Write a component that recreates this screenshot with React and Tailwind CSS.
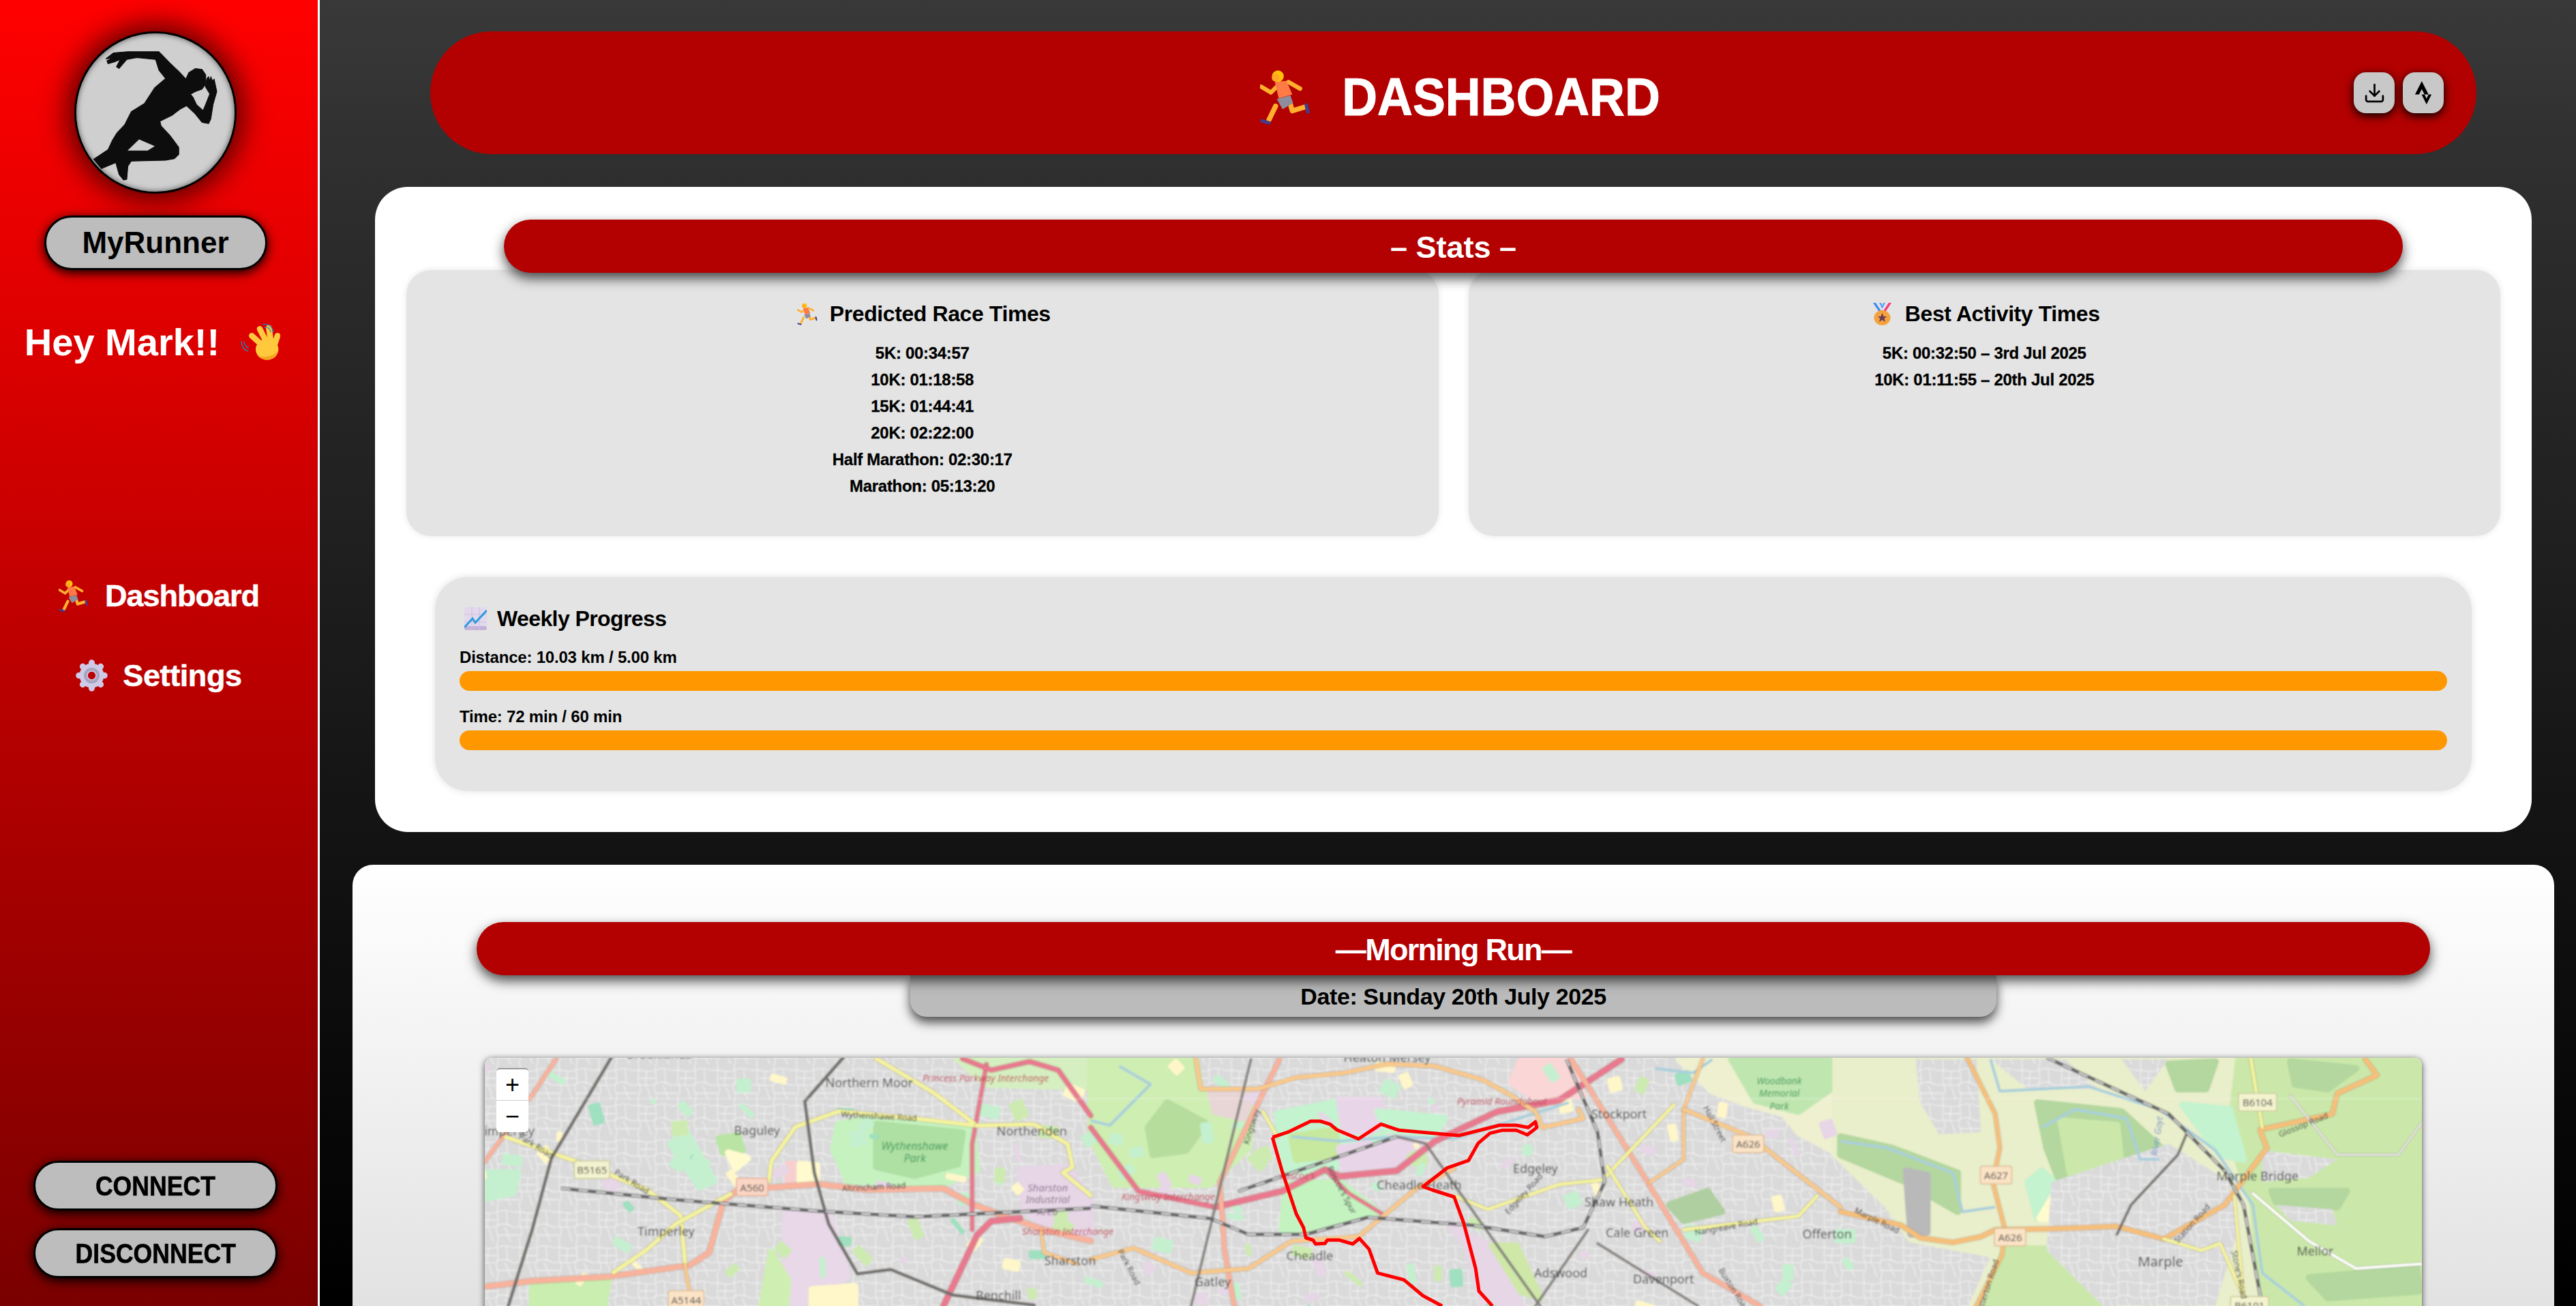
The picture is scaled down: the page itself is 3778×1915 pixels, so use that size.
import React from "react";
import { Download } from "lucide-react";
import { SiStrava } from "react-icons/si";

// coordinates below were read off crops of the map, each with its own scale
const z7 = (x, y) => [500 + x / 1.4255, 1260 + y / 2.394];
const z8 = (x, y) => [1600 + x / 1.4255, 1400 + y / 3];
const z9 = (x, y) => [2700 + x / 1.4545, 1400 + y / 3];

const toPath = (fn, pts, close) =>
  "M" + pts.map((p) => fn(p[0], p[1]).map((n) => n.toFixed(1)).join(" ")).join("L") + (close ? "Z" : "");

const AREAS = [
  // urban-side parks and pink zones
  [z7, "#c6f2c0", [[1040, 930], [1100, 910], [1320, 940], [1330, 1090], [1260, 1140], [1060, 1130], [1030, 1020]]],
  [z7, "#aedfa3", [[1120, 930], [1300, 960], [1290, 1070], [1200, 1110], [1120, 1080]]],
  [z7, "#e6d6e6", [[1420, 1090], [1520, 1080], [1568, 1200], [1568, 1340], [1470, 1290], [1430, 1230]]],
  [z7, "#e8d8e8", [[930, 1240], [1020, 1240], [1060, 1460], [990, 1568], [930, 1568]]],
  [z7, "#d5efc0", [[1290, 700], [1568, 700], [1568, 800], [1350, 790]]],
  [z7, "#c4f0cf", [[690, 1000], [720, 950], [780, 1130], [750, 1150]]],
  [z7, "#b9e4a4", [[790, 980], [830, 970], [840, 1020], [800, 1030]]],
  [z7, "#fffbcf", [[810, 1030], [850, 1050], [825, 1085]]],
  [z7, "#f7cfcf", [[935, 1070], [960, 1070], [960, 1130], [935, 1130]]],
  [z7, "#fffbcf", [[960, 1070], [995, 1075], [995, 1130], [960, 1130]]],
  [z7, "#c4f0cf", [[305, 1100], [370, 1100], [360, 1170], [305, 1190]]],
  [z7, "#c9eeb0", [[400, 1500], [560, 1470], [550, 1568], [400, 1568]]],
  [z7, "#fff7c9", [[985, 1510], [1075, 1500], [1075, 1568], [985, 1568]]],
  [z7, "#cfeeb2", [[900, 1380], [935, 1480], [930, 1568], [880, 1568]]],
  [z8, "#cfeeb2", [[0, 460], [220, 460], [230, 600], [340, 610], [330, 850], [250, 1010], [50, 1010], [0, 800]]],
  [z8, "#b7dd9d", [[120, 760], [160, 650], [240, 740], [200, 860], [130, 880]]],
  [z8, "#c4f3cf", [[390, 700], [530, 640], [560, 800], [500, 960], [400, 950]]],
  [z8, "#c6e89f", [[420, 800], [510, 770], [520, 880], [430, 900]]],
  [z8, "#c4f3c0", [[410, 1010], [520, 1000], [600, 1130], [470, 1210], [400, 1210]]],
  [z8, "#e8d6e8", [[520, 640], [600, 640], [640, 760], [530, 780]]],
  [z8, "#e8d6e8", [[520, 850], [690, 800], [700, 870], [620, 950], [530, 940]]],
  [z8, "#c4f3cf", [[600, 690], [740, 720], [720, 790], [620, 770]]],
  [z8, "#fad6d6", [[900, 460], [1000, 460], [1030, 620], [920, 620], [880, 560]]],
  [z8, "#e6d6e6", [[750, 1180], [830, 1280], [900, 1545], [820, 1545], [790, 1300]]],
  [z8, "#cfe8a8", [[840, 1280], [890, 1280], [940, 1510], [900, 1480]]],
  [z8, "#b0cfa0", [[1210, 1100], [1290, 1040], [1320, 1130], [1240, 1170]]],
  [z8, "#eef0d0", [[1230, 460], [1568, 460], [1568, 880], [1480, 780], [1450, 700], [1380, 660], [1300, 600]]],
  [z8, "#c0e6b0", [[1340, 460], [1568, 460], [1568, 560], [1480, 690], [1390, 640]]],
  [z8, "#e8d6d6", [[250, 600], [340, 610], [320, 720], [260, 690]]],
  // open country to the east, with an uneven edge towards the town
  [z9, "#e9eecb", [[-10, 452], [1245, 452], [1245, 1545], [280, 1545], [330, 1320], [150, 1250], [100, 1100], [-10, 880]]],
  [z9, "#cbe8aa", [[850, 452], [1245, 452], [1245, 1545], [900, 1545], [880, 1100], [830, 800]]],
  [z9, "#b3d79e", [[420, 650], [600, 690], [700, 880], [640, 1000], [470, 1010], [440, 850]]],
  [z9, "#cbe8aa", [[470, 730], [590, 750], [600, 940], [490, 960]]],
  [z9, "#b3d79e", [[0, 800], [110, 850], [250, 960], [250, 1130], [140, 1000], [0, 880]]],
  [z9, "#cbe8aa", [[350, 1290], [560, 1300], [560, 1545], [310, 1545]]],
  [z9, "#c4f3cf", [[730, 660], [830, 680], [860, 900], [810, 880]]],
  [z9, "#b3d79e", [[920, 1040], [1080, 1040], [1060, 1110], [930, 1090]]],
  [z9, "#b3d79e", [[1000, 1420], [1230, 1380], [1235, 1480], [1040, 1510]]],
  [z9, "#b3d79e", [[700, 480], [800, 470], [780, 590], [720, 590]]],
  [z9, "#b3d79e", [[960, 470], [1100, 500], [1040, 590], [970, 570]]],
  [z9, "#b9b9b9", [[140, 950], [185, 970], [185, 1220], [150, 1230]]],
  [z9, "#c4f3cf", [[400, 1000], [430, 950], [470, 1030], [420, 1160]]],
  [z9, "#fffbcf", [[460, 1040], [475, 1030], [445, 1160], [425, 1160]]],
];

const URBAN = [
  [z9, [[450, 1000], [700, 830], [830, 1000], [850, 1200], [800, 1545], [560, 1545], [440, 1300]]],
  [z9, [[160, 460], [290, 460], [300, 780], [210, 790], [170, 650]]],
  [z9, [[320, 460], [480, 460], [550, 590], [400, 590]]],
  [z9, [[600, 460], [700, 460], [650, 600]]],
  [z9, [[900, 860], [1060, 900], [1000, 980], [900, 1000]]],
  [z9, [[930, 1100], [1050, 1120], [1060, 1190], [960, 1170]]],
];

// little parks and pitches scattered through the built-up part
let seed = 11;
const rnd = () => (seed = (seed * 16807) % 2147483647) / 2147483647;
const SPOT_COLOURS = ["#c4f0cf", "#cdebb0", "#fff7c9", "#c4f0cf", "#e6d6e6", "#9fe0c0"];
const SPOTS = Array.from({ length: 130 }, () => ({
  x: 711 + rnd() * 2000,
  y: 1551 + rnd() * 364,
  w: 8 + rnd() * 24,
  h: 7 + rnd() * 18,
  r: rnd() * 90,
  fill: SPOT_COLOURS[Math.floor(rnd() * SPOT_COLOURS.length)],
}));

const ROADS = [
  // [crop, colour, width, points]
  [z7, "#f9b29c", 8, [[301, 1500], [400, 1480], [560, 1465], [730, 1425], [770, 1380], [800, 1200], [830, 1160], [1000, 1140], [1100, 1160], [1260, 1155], [1320, 1210], [1400, 1260], [1470, 1300], [1568, 1340]]],
  [z7, "#f9b29c", 6, [[450, 700], [395, 840]]],
  [z7, "#f9b29c", 6, [[345, 960], [301, 1060]]],
  [z7, "#e8798f", 9, [[1260, 1568], [1330, 1320], [1360, 1270], [1420, 1260]]],
  [z7, "#e8798f", 6, [[1350, 720], [1320, 1000], [1320, 1300]]],
  [z7, "#e8798f", 7, [[1300, 700], [1360, 740], [1440, 710], [1500, 740], [1568, 900]]],
  [z7, "#f4f39e", 6, [[1120, 700], [1240, 820], [1330, 935], [1200, 910], [1040, 885], [950, 940], [900, 1060], [895, 1130]]],
  [z7, "#f4f39e", 6, [[1330, 935], [1450, 930], [1520, 1000], [1530, 1080], [1510, 1100], [1568, 1180]]],
  [z7, "#f4f39e", 6, [[345, 975], [500, 1065], [640, 1160], [710, 1250], [720, 1420]]],
  [z7, "#f4f39e", 6, [[815, 1175], [700, 1280], [640, 1370], [570, 1450]]],
  [z7, "#f9c98c", 5, [[1465, 1300], [1470, 1380], [1540, 1420]]],
  [z7, "#f9c98c", 5, [[720, 1425], [730, 1540]]],
  [z7, "#6e6e6e", 4, [[565, 697], [440, 1050], [400, 1300], [350, 1568]]],
  [z7, "#6e6e6e", 4, [[1050, 697], [970, 850], [990, 1100], [1020, 1280], [1080, 1455], [1150, 1440], [1280, 1530], [1450, 1565]]],
  [z8, "#e8798f", 7, [[0, 760], [100, 1040], [260, 1110]]],
  [z8, "#e8798f", 9, [[260, 1110], [400, 1040], [490, 945], [520, 975], [640, 950], [720, 820], [850, 690], [980, 640], [1110, 460]]],
  [z8, "#e8798f", 5, [[490, 945], [540, 1050], [610, 1140]]],
  [z8, "#f9b29c", 7, [[395, 460], [270, 1000], [280, 1300], [300, 1545]]],
  [z8, "#f9b29c", 7, [[1005, 460], [1150, 950], [1280, 1400], [1400, 1545]]],
  [z8, "#f9c98c", 6, [[220, 460], [230, 590], [350, 590], [430, 540], [530, 520], [620, 480], [720, 490], [820, 550], [880, 620], [930, 690], [945, 760], [1030, 720], [1020, 680]]],
  [z8, "#f9c98c", 6, [[0, 1340], [90, 1290], [210, 1400], [330, 1380], [420, 1260], [560, 1240], [680, 1030], [760, 940]]],
  [z8, "#f9c98c", 5, [[1280, 460], [1240, 680], [1240, 900], [1170, 1000]]],
  [z8, "#f9c98c", 6, [[1240, 680], [1380, 800], [1440, 900], [1568, 1110]]],
  [z8, "#f4f39e", 5, [[360, 690], [390, 800]]],
  [z8, "#f4f39e", 5, [[760, 1060], [830, 1120], [980, 1010], [1070, 990], [1220, 660]]],
  [z8, "#f4f39e", 5, [[1080, 930], [1160, 1200], [1190, 1260]]],
  [z8, "#f4f39e", 5, [[1240, 1210], [1480, 1150], [1520, 1060]]],
  [z8, "#808080", 3, [[335, 460], [210, 1545]]],
  [z8, "#808080", 3, [[310, 1040], [640, 800], [700, 830], [790, 1100], [940, 1545]]],
  [z8, "#808080", 3, [[1040, 1210], [930, 1545]]],
  [z8, "#808080", 3, [[1060, 1270], [1270, 1545]]],
  [z9, "#f6bf7a", 6, [[270, 452], [330, 700], [340, 850], [325, 1000], [350, 1200], [345, 1320], [290, 1545]]],
  [z9, "#f6bf7a", 7, [[0, 1130], [130, 1190], [170, 1245], [240, 1265], [300, 1240], [330, 1210], [450, 1205], [590, 1195], [690, 1250], [820, 1100], [910, 850], [895, 770], [1050, 700], [1060, 610], [1145, 530], [1120, 460]]],
  [z9, "#f4f39e", 5, [[875, 452], [900, 760]]],
  [z9, "#f4f39e", 5, [[690, 1250], [770, 1300], [810, 1270], [860, 1500]]],
  [z9, "#f4f39e", 4, [[840, 1060], [860, 1500]]],
  [z9, "#ffffff", 4, [[880, 1050], [1000, 1260], [1100, 1380], [1240, 1360]]],
  [z9, "#e4e4e4", 3, [[960, 620], [1060, 880], [1190, 880], [1240, 740]]],
  [z9, "#6d6d6d", 3, [[740, 780], [720, 880], [620, 1100], [590, 1230]]],
];

const RIVERS = [
  [z8, [[60, 490], [125, 570], [40, 750], [0, 730]]],
  [z8, [[420, 800], [520, 820], [640, 800], [760, 810], [1000, 650]]],
  [z8, [[1180, 500], [1260, 520], [1300, 460]]],
  [z9, [[320, 460], [340, 600], [530, 580], [680, 680], [800, 860], [880, 1100], [900, 1400], [990, 1545]]],
  [z9, [[0, 820], [100, 850], [240, 960], [260, 1130], [330, 1110]]],
  [z9, [[430, 760], [500, 680], [610, 720], [640, 900], [680, 900]]],
];

const RAILS = [
  [z7, [[460, 1155], [700, 1195], [1000, 1235], [1200, 1255], [1568, 1225]]],
  [z8, [[0, 1105], [250, 1160], [330, 1230], [450, 1230], [580, 1155], [800, 1190], [950, 1240], [1030, 1200], [1075, 1000], [1060, 780], [995, 460]]],
  [z8, [[310, 1040], [640, 800]]],
  [z9, [[440, 452], [700, 700], [820, 950], [860, 1100], [900, 1545]]],
];

const ROUTE = [
  [[380, 803], [415, 778], [460, 732], [480, 732], [500, 745], [515, 770], [560, 810], [607, 745], [645, 772], [770, 795], [855, 750], [890, 750], [915, 760], [930, 735], [933, 760], [913, 792], [890, 772], [860, 772], [835, 785], [810, 830], [790, 905], [745, 938], [695, 1020], [715, 1035], [760, 1065], [780, 1180], [795, 1300], [805, 1380], [812, 1480], [840, 1545]],
  [[380, 803], [400, 950], [430, 1140], [445, 1200], [450, 1245], [465, 1255], [470, 1272], [490, 1270], [495, 1255], [520, 1255], [548, 1272], [562, 1248], [582, 1295], [600, 1400], [655, 1430], [695, 1500], [735, 1545]],
];

// [crop, x, y, text, size, colour, rotation, italic]
const LABELS = [
  [z7, 665, 700, "Brooklands", 18, "#444"],
  [z7, 1105, 800, "Northern Moor", 18, "#444"],
  [z7, 1348, 780, "Princess Parkway Interchange", 14, "#c3465a", 0, true],
  [z7, 870, 968, "Baguley", 18, "#444"],
  [z7, 1445, 970, "Northenden", 18, "#444"],
  [z7, 1200, 1020, "Wythenshawe", 16, "#3d9a5a", 0, true],
  [z7, 1200, 1062, "Park", 16, "#3d9a5a", 0, true],
  [z7, 1125, 912, "Wythenshawe Road", 12, "#333", 3],
  [z7, 1115, 1160, "Altrincham Road", 12, "#333", -3],
  [z7, 405, 1015, "Park Road", 12, "#333", 32],
  [z7, 605, 1140, "Park Road", 12, "#333", 32],
  [z7, 345, 970, "Timperley", 18, "#444"],
  [z7, 680, 1322, "Timperley", 18, "#444"],
  [z7, 1478, 1165, "Sharston", 15, "#8b6f8b", 0, true],
  [z7, 1478, 1207, "Industrial", 15, "#8b6f8b", 0, true],
  [z7, 1478, 1250, "Area", 15, "#8b6f8b", 0, true],
  [z7, 1520, 1320, "Sharston Interchange", 14, "#c3465a", 0, true],
  [z7, 1375, 1547, "Benchill", 18, "#444"],
  [z7, 1525, 1425, "Sharston", 18, "#444"],
  [z8, 620, 470, "Heaton Mersey", 18, "#444"],
  [z8, 860, 660, "Pyramid Roundabout", 14, "#c3465a", 0, true],
  [z8, 1105, 720, "Stockport", 18, "#444"],
  [z8, 1440, 570, "Woodbank", 14, "#3d9a5a", 0, true],
  [z8, 1440, 625, "Memorial", 14, "#3d9a5a", 0, true],
  [z8, 1440, 680, "Park", 14, "#3d9a5a", 0, true],
  [z8, 1300, 750, "Hall Street", 12, "#333", 62],
  [z8, 930, 960, "Edgeley", 18, "#444"],
  [z8, 910, 1060, "Edgeley Road", 12, "#333", -48],
  [z8, 1105, 1108, "Shaw Heath", 18, "#444"],
  [z8, 1143, 1242, "Cale Green", 18, "#444"],
  [z8, 1330, 1210, "Nangreave Road", 12, "#333", -10],
  [z8, 1540, 1248, "Offerton", 18, "#444"],
  [z8, 983, 1418, "Adswood", 18, "#444"],
  [z8, 1198, 1445, "Davenport", 18, "#444"],
  [z8, 687, 1032, "Cheadle Heath", 18, "#444"],
  [z8, 432, 988, "Roscoe's", 14, "#c3465a", 0, true],
  [z8, 520, 1040, "Roscoe's Spur", 12, "#333", 62],
  [z8, 162, 1080, "Kingsway Interchange", 14, "#c3465a", 0, true],
  [z8, 458, 1345, "Cheadle", 18, "#444"],
  [z8, 255, 1458, "Gatley", 18, "#444"],
  [z8, 342, 760, "Kingsway", 12, "#333", -72],
  [z8, 1340, 1480, "Buxton Road", 12, "#333", 58],
  [z8, 75, 1380, "Park Road", 12, "#333", 62],
  [z9, 890, 992, "Marple Bridge", 18, "#444"],
  [z9, 1013, 1322, "Mellor", 18, "#444"],
  [z9, 683, 1372, "Marple", 20, "#444"],
  [z9, 990, 760, "Glossop Road", 12, "#333", -22],
  [z9, 755, 1190, "Station Road", 12, "#333", -48],
  [z9, 75, 1180, "Marple Road", 12, "#333", 26],
  [z9, 845, 1410, "Stone's Road", 12, "#333", 78],
  [z9, 682, 800, "River Goyt", 13, "#6f93c9", -82, true],
  [z9, 320, 1460, "Otterton Road", 12, "#333", -72],
];

const SHIELDS = [
  [z7, 525, 1092, "B5165", "#f3f3cf", "#c9c99a", 52],
  [z7, 860, 1153, "A560", "#fbd6c4", "#e0ab95", 46],
  [z7, 722, 1548, "A5144", "#fbe3c6", "#dcbb90", 52],
  [z8, 1375, 835, "A626", "#fbe3c6", "#dcbb90", 46],
  [z9, 890, 652, "B6104", "#f3f3cf", "#c9c99a", 56],
  [z9, 332, 972, "A627", "#fbe3c6", "#dcbb90", 46],
  [z9, 362, 1245, "A626", "#fbe3c6", "#dcbb90", 46],
  [z9, 873, 1545, "B6101", "#f3f3cf", "#c9c99a", 56],
];

const RouteMap = () => (
  <svg viewBox="711 1551 2842 520" className="block w-full h-[520px]" preserveAspectRatio="none">
    <defs>
      <pattern id="streets" width="58" height="52" patternUnits="userSpaceOnUse">
        <rect width="58" height="52" fill="#dadada" />
        <path
          d="M0 10C10 6 18 14 30 10S48 5 58 10M0 32C10 27 20 36 32 30S48 27 58 32M8 0C11 13 5 22 10 32S6 46 8 52M34 0C30 11 38 20 33 30S38 44 34 52M20 11C21 19 17 24 20 32M47 6C46 16 50 22 47 29M20 35C27 40 22 46 28 52M44 32C50 38 46 44 54 52M0 43H8M34 43H58M10 21H33"
          fill="none"
          stroke="#f1f1f1"
          strokeWidth="1.3"
        />
      </pattern>
      <filter id="soft">
        <feGaussianBlur stdDeviation="0.8" />
      </filter>
    </defs>
    <g filter="url(#soft)">
      <rect x="705" y="1545" width="2854" height="530" fill="url(#streets)" />
      {AREAS.map(([fn, fill, pts], i) => (
        <path key={i} d={toPath(fn, pts, true)} fill={fill} stroke={fill} strokeWidth="10" strokeLinejoin="round" />
      ))}
      {URBAN.map(([fn, pts], i) => (
        <path key={i} d={toPath(fn, pts, true)} fill="url(#streets)" />
      ))}
      {SPOTS.map((s, i) => (
        <rect key={i} x={s.x} y={s.y} width={s.w} height={s.h} rx="3" fill={s.fill} transform={`rotate(${s.r} ${s.x} ${s.y})`} />
      ))}
      {RIVERS.map(([fn, pts], i) => (
        <path key={i} d={toPath(fn, pts)} fill="none" stroke="#a9cfdc" strokeWidth="4" strokeLinejoin="round" />
      ))}
      {ROADS.map(([fn, color, w, pts], i) => (
        <g key={i} fill="none" strokeLinejoin="round" strokeLinecap="round">
          <path d={toPath(fn, pts)} stroke="#7a6a50" strokeOpacity="0.3" strokeWidth={w + 2} />
          <path d={toPath(fn, pts)} stroke={color} strokeWidth={w} />
        </g>
      ))}
      {RAILS.map(([fn, pts], i) => (
        <g key={i} fill="none" strokeLinejoin="round">
          <path d={toPath(fn, pts)} stroke="#666" strokeWidth="5" />
          <path d={toPath(fn, pts)} stroke="#e8e8e8" strokeWidth="2" strokeDasharray="14 12" />
        </g>
      ))}
      <path d="M711 1611H3553" stroke="#ffffff" strokeOpacity="0.45" strokeWidth="1" />
      {SHIELDS.map(([fn, x, y, text, fill, line, w], i) => {
        const [px, py] = fn(x, y);
        return (
          <g key={i}>
            <rect x={px - w / 2} y={py - 14} width={w} height={26} rx="3" fill={fill} stroke={line} strokeWidth="1.5" />
            <text x={px} y={py + 5} textAnchor="middle" fontSize="15" fill="#444" className="font-['Noto_Sans',sans-serif]">
              {text}
            </text>
          </g>
        );
      })}
      {LABELS.map(([fn, x, y, text, size, color, rot, italic], i) => {
        const [px, py] = fn(x, y);
        return (
          <text
            key={i}
            x={px}
            y={py}
            textAnchor="middle"
            fontSize={size}
            fontStyle={italic ? "italic" : "normal"}
            fill={color}
            transform={rot ? `rotate(${rot} ${px} ${py})` : undefined}
            className="font-['Noto_Sans',sans-serif]"
          >
            {text}
          </text>
        );
      })}
    </g>
    {ROUTE.map((pts, i) => (
      <path key={i} d={toPath(z8, pts)} fill="none" stroke="#ff0000" strokeWidth="5" strokeLinejoin="round" />
    ))}
  </svg>
);

const RunnerLogo = () => (
  <svg viewBox="327 130 715 667" preserveAspectRatio="none" className="block w-full h-full">
    <path
      fill="#0d0d0d"
      stroke="#0d0d0d"
      strokeWidth="3"
      strokeLinejoin="round"
      fillRule="evenodd"
      d="M460 237L495 212L560 207L700 207L712 218L750 255L790 290L810 310L822 322L835 295L865 278L895 282L912 305L912 345L905 352L895 365L865 375L845 385L828 370L855 400L870 430L900 455L915 420L930 385L910 355L917 320L925 312L930 330L935 312L942 330L950 322L955 345L962 375L945 430L935 490L925 510L895 505L860 465L825 435L795 450L760 475L705 500L710 520L750 560L790 610L790 640L770 658L730 665L575 668L560 690L555 745L540 748L520 725L505 675L440 700L405 660L470 620L490 580L510 550L545 515L575 460L635 425L680 360L730 320L700 285L685 240L600 232L555 240L520 278L508 270L525 240L500 250L470 258L465 245L490 235ZM555 625L610 575L685 605L650 625Z"
    />
  </svg>
);

const RunnerIcon = ({ className }) => (
  <svg viewBox="0 0 128 144" className={className}>
    <g fill="none" strokeLinecap="round" strokeLinejoin="round">
      <path d="M78 90L83 107L116 97" stroke="#ffb02e" strokeWidth="13" />
      <path d="M40 95L23 130" stroke="#ffb02e" strokeWidth="13" />
      <path d="M43 45L28 60L3 45" stroke="#ffb02e" strokeWidth="11" />
      <path d="M73 33L103 50" stroke="#ffb02e" strokeWidth="11" />
      <path d="M119 92L123 110" stroke="#433b8b" strokeWidth="9" />
      <path d="M5 133L23 138" stroke="#433b8b" strokeWidth="9" />
    </g>
    <path d="M38 33L68 30L83 65L48 75Z" fill="#ff7a45" />
    <path d="M43 77L78 67L85 87L58 103Z" fill="#8d8d9c" />
    <circle cx="46" cy="18" r="15" fill="#ffc107" />
    <circle cx="40" cy="22" r="10" fill="#ffa726" />
  </svg>
);

const WaveIcon = ({ className }) => (
  <svg viewBox="0 0 180 165" className={className}>
    <g fill="none" strokeLinecap="round">
      <path d="M55 55L110 105M90 25L125 95M130 20L140 90M168 55L150 110" stroke="#ffc83d" strokeWidth="26" />
      <path d="M10 80C8 100 20 118 38 122M22 82C22 94 30 104 40 108" stroke="#1a8ac9" strokeWidth="4" />
      <path d="M105 5C125 0 145 15 150 38M112 18C125 15 135 25 138 38" stroke="#1a8ac9" strokeWidth="4" />
    </g>
    <ellipse cx="122" cy="115" rx="50" ry="46" fill="#ffc83d" />
    <path d="M85 145C110 170 160 165 172 115C165 140 120 155 85 145Z" fill="#f6a21c" />
  </svg>
);

const GearIcon = ({ className }) => (
  <svg viewBox="0 0 100 100" className={className}>
    <g stroke="#cfc9e8" strokeWidth="19" strokeLinecap="round">
      <path d="M50 10V28M50 72V90M10 50H28M72 50H90M22 22L34 34M66 66L78 78M78 22L66 34M34 66L22 78" />
    </g>
    <circle cx="50" cy="50" r="25" fill="none" stroke="#cfc9e8" strokeWidth="26" />
    <circle cx="50" cy="50" r="20" fill="none" stroke="#a8a3bf" strokeWidth="9" />
  </svg>
);

const MedalIcon = ({ className }) => (
  <svg viewBox="0 0 31 33" className={className}>
    <path d="M2 0L12 15H16L6 0Z" fill="#3f8cf0" />
    <path d="M29 0L19 15H15L25 0Z" fill="#f5397b" />
    <path d="M11 0L15.5 9L20 0H17L15.5 4L14 0Z" fill="#5aa2ff" />
    <ellipse cx="15.5" cy="22" rx="12" ry="11" fill="#f4a23c" />
    <path d="M15.5 15L17.5 20H22L18.5 23L20 28L15.5 25L11 28L12.5 23L9 20H13.5Z" fill="#6b3b5a" />
  </svg>
);

const ChartIcon = ({ className }) => (
  <svg viewBox="0 0 33 34" className={className}>
    <rect width="33" height="34" rx="4" fill="#e2d9ee" />
    <rect y="28" width="33" height="6" rx="3" fill="#c3b3d8" />
    <path d="M11 0V34M22 0V34M0 11H33M0 22H33" stroke="#cfc3de" strokeWidth="1.2" />
    <path d="M0 30L12 17L16 23L33 5" fill="none" stroke="#2f9bdc" strokeWidth="3" />
  </svg>
);

const Pill = ({ children, className }) => (
  <button
    type="button"
    className={`flex items-center justify-center rounded-full border-[3px] border-black bg-[#bdbdbd] shadow-[0_4px_16px_#000] text-black font-bold ${className}`}
  >
    {children}
  </button>
);

const RedBar = ({ children, className }) => (
  <div
    className={`relative z-20 h-[78px] pt-[3px] flex items-center justify-center rounded-[39px] bg-[#b30000] text-white text-[45px] font-bold shadow-[0_8px_18px_rgba(0,0,0,0.7)] ${className}`}
  >
    {children}
  </div>
);

const predicted = ["5K: 00:34:57", "10K: 01:18:58", "15K: 01:44:41", "20K: 02:22:00", "Half Marathon: 02:30:17", "Marathon: 05:13:20"];
const best = ["5K: 00:32:50 – 3rd Jul 2025", "10K: 01:11:55 – 20th Jul 2025"];

const TimesCard = ({ icon, title, rows }) => (
  <div className="h-[390px] pt-[45px] flex flex-col items-center rounded-[36px] bg-[#e4e4e4] shadow-[0_0_10px_rgba(0,0,0,0.1)]">
    <div className="h-[38px] pl-[4px] flex items-center gap-[18px] text-[32px] font-bold text-black tracking-[-0.4px]">
      {icon}
      <span>{title}</span>
    </div>
    <div className="mt-[19px] text-[24px] leading-[39px] font-bold text-black text-center tracking-[-0.3px] [-webkit-text-stroke:0.3px]">
      {rows.map((r) => (
        <p key={r}>{r}</p>
      ))}
    </div>
  </div>
);

const Progress = ({ label, className }) => (
  <div className={className}>
    <p className="text-[24px] leading-[28px] font-bold text-black tracking-[-0.2px]">{label}</p>
    <div className="mt-[6px] h-[29px] rounded-full bg-[#ff9800]" />
  </div>
);

export default function App() {
  return (
    <div className="flex h-[1915px] overflow-hidden font-['Liberation_Sans',Arial,sans-serif]">
      <aside className="w-[469px] shrink-0 h-full pr-[10px] flex flex-col items-center border-r-[3px] border-white bg-[linear-gradient(180deg,#ff0000,#7a0000)]">
        <div className="mt-[46px] w-[238px] h-[238px] shrink-0 rounded-full overflow-hidden border-[3px] border-black bg-[#cfcfcf] shadow-[0_0_40px_10px_rgba(0,0,0,0.65)]">
          <div className="w-full h-full rounded-full shadow-[inset_0_0_8px_rgba(0,0,0,0.6)]">
            <RunnerLogo />
          </div>
        </div>
        <Pill className="mt-[32px] w-[327px] h-[80px] text-[44px]">MyRunner</Pill>
        <div className="mt-[76px] -ml-[9px] flex items-center gap-[29px] text-white text-[56px] font-bold leading-none">
          <span>Hey Mark!!</span>
          <WaveIcon className="w-[60px] h-[59px]" />
        </div>
        <nav className="mt-[314px] ml-[10px] flex flex-col items-center gap-[60px] text-white text-[45px] font-bold leading-[57px] [-webkit-text-stroke:0.5px]">
          <a className="flex items-center gap-[25px] tracking-[-1px]">
            <RunnerIcon className="w-[43px] h-[48px]" />
            Dashboard
          </a>
          <a className="flex items-center gap-[22px] tracking-[-0.4px]">
            <GearIcon className="w-[47px] h-[47px]" />
            Settings
          </a>
        </nav>
        <div className="mt-auto mb-[41px] flex flex-col gap-[26px]">
          <Pill className="w-[358px] h-[73px] text-[40px] [-webkit-text-stroke:0.6px]">
            <span className="inline-block scale-x-[0.89]">CONNECT</span>
          </Pill>
          <Pill className="w-[358px] h-[73px] text-[40px] [-webkit-text-stroke:0.6px]">
            <span className="inline-block scale-x-[0.89]">DISCONNECT</span>
          </Pill>
        </div>
      </aside>

      <main className="flex-1 min-w-0 h-full overflow-hidden pl-[48px] pr-[32px] bg-[linear-gradient(180deg,#393939_0%,#2e2e2e_14%,#1e1e1e_44%,#131313_64%,#000_100%)]">
        <header className="relative mt-[46px] mx-[114px] h-[180px] pl-[39px] pt-[12px] flex items-center justify-center gap-[27px] rounded-[90px] bg-[#b30000] text-white">
          <RunnerIcon className="w-[73px] h-[83px]" />
          <h1 className="text-[78px] font-bold leading-none [-webkit-text-stroke:1px]">
            <span className="inline-block scale-x-[0.92]">DASHBOARD</span>
          </h1>
          <div className="absolute right-[48px] top-[60px] flex gap-[12px]">
            <button type="button" className="w-[60px] h-[60px] flex items-center justify-center rounded-[18px] bg-[#c8c8c8] text-black shadow-[0_4px_14px_#000]">
              <Download size={33} />
            </button>
            <button type="button" className="w-[60px] h-[60px] flex items-center justify-center rounded-[18px] bg-[#c8c8c8] text-black shadow-[0_4px_14px_#000]">
              <SiStrava size={34} />
            </button>
          </div>
        </header>

        <section className="mt-[48px] mx-[33px] h-[946px] pt-[48px] rounded-[48px] bg-white">
          <RedBar className="mx-[189px]">– Stats –</RedBar>
          <div className="-mt-[4px] mx-[46px] grid grid-cols-2 gap-[44px]">
            <TimesCard icon={<RunnerIcon className="w-[30px] h-[33px]" />} title="Predicted Race Times" rows={predicted} />
            <TimesCard icon={<MedalIcon className="w-[31px] h-[33px]" />} title="Best Activity Times" rows={best} />
          </div>
          <div className="mt-[60px] mx-[88px] h-[314px] pt-[37px] px-[36px] rounded-[48px] bg-[#e4e4e4] shadow-[0_0_12px_rgba(0,0,0,0.12)]">
            <div className="flex items-center gap-[15px] pl-[7px] text-[32px] font-bold text-black tracking-[-0.6px]">
              <ChartIcon className="w-[33px] h-[34px]" />
              <span>Weekly Progress</span>
            </div>
            <Progress label="Distance: 10.03 km / 5.00 km" className="mt-[19px]" />
            <Progress label="Time: 72 min / 60 min" className="mt-[24px]" />
          </div>
        </section>

        <section className="mt-[48px] h-[900px] pt-[84px] rounded-[30px] bg-[linear-gradient(180deg,#fff_0px,#e2e2e2_647px)]">
          <RedBar className="mx-[182px] tracking-[-1.7px]">—Morning Run—</RedBar>
          <div className="relative z-10 mx-[818px] h-[61px] pt-[2px] flex items-center justify-center rounded-b-[24px] bg-[#bbbbbb] text-black text-[34px] font-bold shadow-[0_8px_16px_rgba(0,0,0,0.7)] tracking-[-0.4px]">
            Date: Sunday 20th July 2025
          </div>
          <div className="relative mt-[60px] mx-[194px] rounded-[10px] overflow-hidden shadow-[0_2px_10px_rgba(0,0,0,0.7)]">
            <RouteMap />
            <div className="absolute left-[17px] top-[15px] w-[47px] rounded-[5px] bg-white border-t-[2px] border-[#999] text-black">
              <div className="h-[46px] flex items-center justify-center text-[36px] leading-none border-b border-[#ccc]">+</div>
              <div className="h-[46px] flex items-center justify-center text-[36px] leading-none">−</div>
            </div>
          </div>
        </section>
      </main>
    </div>
  );
}
